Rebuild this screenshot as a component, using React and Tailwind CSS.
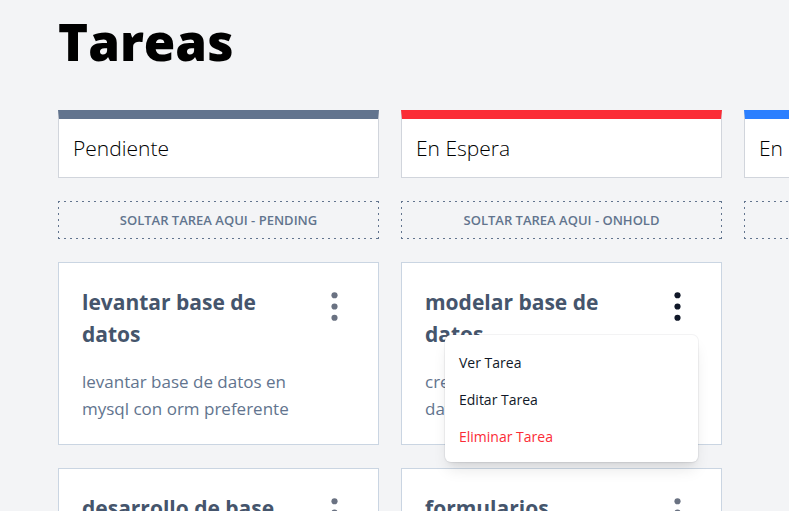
import { useState } from 'react';

const columns = [
  {
    id: 'pending',
    name: 'Pendiente',
    accent: 'border-t-slate-500',
    tasks: [
      { id: 't1', title: 'levantar base de datos', text: 'levantar base de datos en mysql con orm preferente' },
      { id: 't2', title: 'desarrollo de base', text: '' },
    ],
  },
  {
    id: 'onHold',
    name: 'En Espera',
    accent: 'border-t-red-500',
    tasks: [
      { id: 't3', title: 'modelar base de datos', text: 'crear modelo de la base datos' },
      { id: 't4', title: 'formularios', text: '' },
    ],
  },
  { id: 'inProgress', name: 'En Progreso', accent: 'border-t-blue-500', tasks: [] },
];

function DotsIcon() {
  return (
    <svg viewBox="0 0 20 20" fill="currentColor" aria-hidden="true" className="size-[41px]">
      <circle cx="10" cy="4.5" r="1.5" />
      <circle cx="10" cy="10" r="1.5" />
      <circle cx="10" cy="15.5" r="1.5" />
    </svg>
  );
}

function TaskMenu({ open, onToggle }) {
  return (
    <div className="relative shrink-0 self-start">
      <button
        type="button"
        aria-label="opciones"
        aria-expanded={open}
        onClick={onToggle}
        className={open ? 'block text-gray-900' : 'block text-gray-500 hover:text-gray-900'}
      >
        <DotsIcon />
      </button>
      {open && (
        <div
          role="menu"
          className="absolute right-0 top-full z-10 mt-2 w-[253px] rounded-md bg-white pb-[7px] pt-[9px] text-[14px] leading-[23px] shadow-lg ring-1 ring-gray-900/5"
        >
          <button type="button" role="menuitem" className="block w-full px-3.5 py-[7px] text-left text-gray-900">
            Ver Tarea
          </button>
          <button type="button" role="menuitem" className="block w-full px-3.5 py-[7px] text-left text-gray-900">
            Editar Tarea
          </button>
          <button type="button" role="menuitem" className="block w-full px-3.5 py-[7px] text-left text-red-500">
            Eliminar Tarea
          </button>
        </div>
      )}
    </div>
  );
}

export default function App() {
  const [openTask, setOpenTask] = useState('t3');

  return (
    <main className="min-h-screen bg-gray-100 pl-[58px] pt-3 font-['Open_Sans','Noto_Sans',sans-serif]">
      <h1 className="text-[51px] font-black leading-[58px] text-black">Tareas</h1>
      <div className="mt-10 flex gap-[22px] overflow-x-auto pb-24">
        {columns.map((column) => (
          <section key={column.id} className="w-[321px] shrink-0">
            <h2
              className={`border border-t-[9px] border-gray-300 bg-white p-3.5 text-[21px] font-light leading-[30px] text-black ${column.accent}`}
            >
              {column.name}
            </h2>
            <div className="mt-[23px] bg-[linear-gradient(90deg,#62748e_2px,transparent_2px),linear-gradient(90deg,#62748e_2px,transparent_2px),linear-gradient(#62748e_2px,transparent_2px),linear-gradient(#62748e_2px,transparent_2px)] bg-[position:0_0,0_100%,0_0,100%_0] [background-repeat:repeat-x,repeat-x,repeat-y,repeat-y] [background-size:6px_1px,6px_1px,1px_6px,1px_6px] p-[9px] text-center text-[13px] font-semibold uppercase leading-5 text-slate-500">
              Soltar tarea aqui - {column.id}
            </div>
            <ul className="mt-[23px] space-y-[23px]">
              {column.tasks.map((task) => (
                <li key={task.id} className="flex justify-between gap-3 border border-slate-300 bg-white p-[23px] pb-[22px]">
                  <div className="w-[210px] min-w-0">
                    <h3 className="text-[21px] font-bold leading-8 text-slate-600">{task.title}</h3>
                    <p className="mt-[18px] text-[17px] leading-[27px] text-slate-500">{task.text}</p>
                  </div>
                  <TaskMenu
                    open={openTask === task.id}
                    onToggle={() => setOpenTask(openTask === task.id ? null : task.id)}
                  />
                </li>
              ))}
            </ul>
          </section>
        ))}
      </div>
    </main>
  );
}
